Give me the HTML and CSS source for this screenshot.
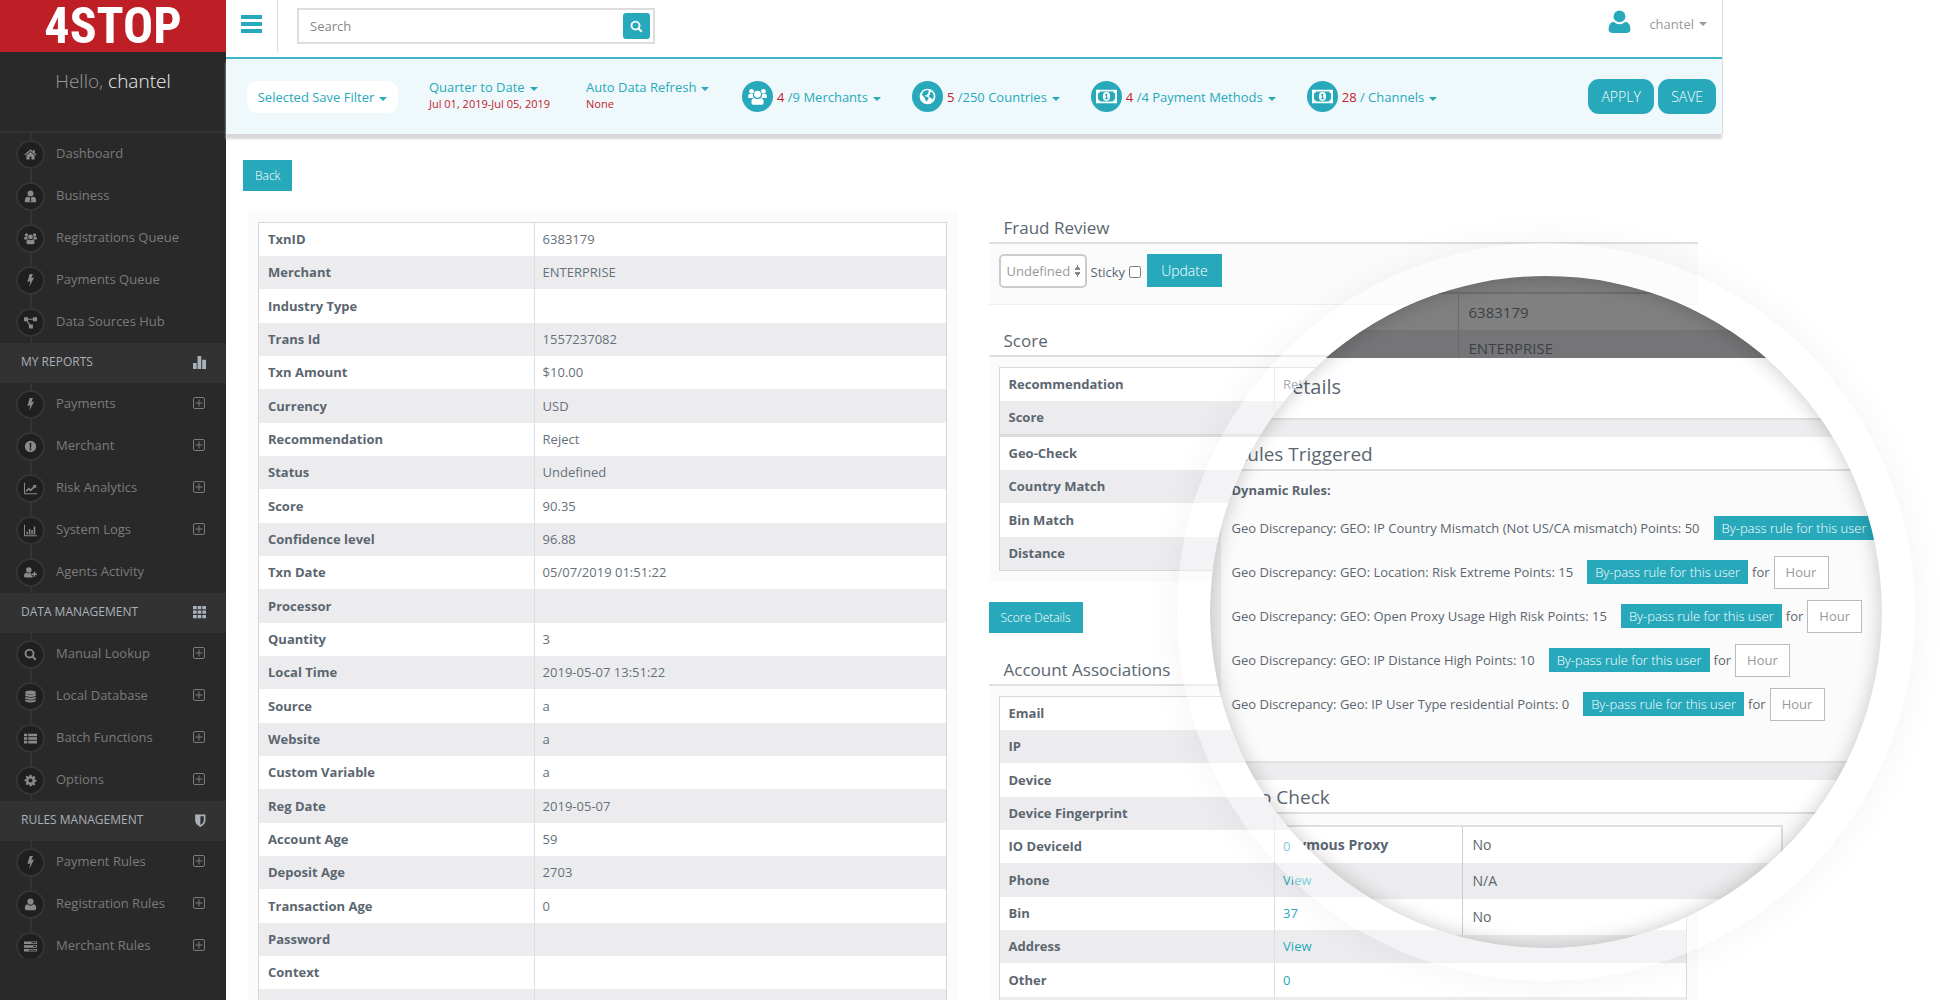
FILE: index.html
```html
<!DOCTYPE html>
<html lang="en">
<head>
<meta charset="utf-8">
<title>4STOP – Transaction details</title>
<link rel="stylesheet" href="styles.css">
</head>
<body>
<svg class="sprite" aria-hidden="true">
  <symbol id="home" viewBox="0 0 16 16"><path d="M8 1.6 0.6 8l1 1.2L8 3.8l6.4 5.4 1-1.2-2.2-1.9V2.4h-2v2z"/><path d="M8 5 3 9.2V14h3.8v-3.6h2.4V14H13V9.2z"/></symbol>
  <symbol id="usertie" viewBox="0 0 16 16"><circle cx="8" cy="4.200" r="3.600"/><path fill-rule="evenodd" d="M5 8.200Q1 8.600 1 12.600V14q0 1 1 1h12q1 0 1-1v-1.400q0-4-4-4.400L8 9.400zM7.200 9.600h1.600l-.4 1.200.8 3.200H6.800l.8-3.200z"/></symbol>
  <symbol id="users" viewBox="0 0 16 16"><circle cx="3" cy="3.600" r="2"/><circle cx="13" cy="3.600" r="2"/><path d="M0.200 9V7.400Q.2 5.600 2 5.800h2.200Q3.900 8 5 9.200H2Q.2 9.600.2 9zM15.800 9V7.400q0-1.800-1.800-1.600h-2.200q.3 2.200-.8 3.400h3q1.800.4 1.800-.2z"/><circle cx="8" cy="6" r="2.900"/><path d="M5 9.300Q2.800 10 2.800 12.400q0 2.600 2 2.600h6.400q2 0 2-2.600 0-2.400-2.200-3.100-3 1.700-6 0z"/></symbol>
  <symbol id="bolt" viewBox="0 0 16 16"><path d="M7 0h4L9 4.800l3.400-.6L6.400 16l1.400-7-3.600.8z"/></symbol>
  <symbol id="hub" viewBox="0 0 16 16"><path d="M0 1.500h5v5H0zM11 1.500h5v5h-5zM6 10.500h5v5H6zM5 3.300h6v1.400H5zM3.200 6.500l1.400-.5 3.200 4.600-1.600.4z"/></symbol>
  <symbol id="alert" viewBox="0 0 16 16"><path fill-rule="evenodd" d="M8 1a7 7 0 1 0 0 14A7 7 0 0 0 8 1zM6.900 3.500h2.200L8.800 9.500H7.200zM7 10.500h2v2H7z"/></symbol>
  <symbol id="line" viewBox="0 0 16 16"><path d="M0 1h1.200v12.800H16V15H0z"/><path d="m2 10.800 3.900-4L8 8.900l4-4-1.300-1.300H15v4.300l-1.500-1.500L8 11.700 5.900 9.600 3 12.200z"/></symbol>
  <symbol id="bars" viewBox="0 0 16 16"><path d="M0 1h1.200v12.800H16V15H0zM3 9.500h1.800v3.300H3zM6 6h1.800v6.800H6zM9 7.500h1.800v5.300H9zM12 3h1.800v9.800H12z"/></symbol>
  <symbol id="useradd" viewBox="0 0 16 16"><circle cx="6" cy="5" r="3.400"/><path d="M3 8.400Q0 8.800 0 12.400 0 14 1.600 14h9V11.600H9V9.400L8.800 8.400Q6 10.200 3 8.400zM12 7h1.800v2.300H16V11h-2.200v2.300H12V11H9.800V9.300H12z"/></symbol>
  <symbol id="search" viewBox="0 0 16 16"><path fill-rule="evenodd" d="M6.800.8a6 6 0 1 0 3.300 11l3.400 3.500 1.900-1.900-3.500-3.400A6 6 0 0 0 6.800.8zm0 2.200a3.800 3.800 0 1 1 0 7.600 3.800 3.800 0 0 1 0-7.600z"/></symbol>
  <symbol id="db" viewBox="0 0 16 16"><ellipse cx="8" cy="3" rx="6.500" ry="2.500"/><path d="M1.500 4.700q6.500 2.600 13 0V7q-6.500 3-13 0zM1.500 8.200q6.500 2.600 13 0v2.300q-6.500 3-13 0zM1.500 11.700q6.500 2.600 13 0v2q-6.500 3.400-13 0z"/></symbol>
  <symbol id="list" viewBox="0 0 16 16"><path d="M0 2h4v3.200H0zM5.200 2H16v3.200H5.200zM0 6.400h4v3.200H0zM5.200 6.400H16v3.200H5.200zM0 10.800h4V14H0zM5.200 10.800H16V14H5.200z"/></symbol>
  <symbol id="gear" viewBox="0 0 16 16"><path fill-rule="evenodd" d="M6.800 1h2.400l.4 2 1.200.5L12.500 2.300l1.500 1.600-1 1.700.4 1.200 1.900.4v2.200l-2 .4-.5 1.200 1.200 1.700-1.600 1.500-1.700-1-1.200.5L9.200 15H6.800l-.4-2-1.200-.5-1.700 1.200L2 12.200l1-1.700-.4-1.200-1.900-.4V6.800l2-.4.5-1.200L2 3.500 3.600 2l1.700 1L6.400 3zM8 5.400a2.600 2.600 0 1 0 0 5.200 2.600 2.600 0 0 0 0-5.200z"/></symbol>
  <symbol id="user" viewBox="0 0 16 16"><circle cx="8" cy="4.400" r="3.800"/><path d="M4.200 7.800Q1 8.400 1 12.700 1 15 3.200 15h9.600q2.200 0 2.200-2.300 0-4.300-3.200-4.900Q8 11 4.200 7.800z"/></symbol>
  <symbol id="tasks" viewBox="0 0 16 16"><path fill-rule="evenodd" d="M0 1.800h16V5H0zM9 2.800V4h6V2.800zM0 6.400h16v3.200H0zM11.500 7.400v1.200H15V7.400zM0 11h16v3.200H0zM6 12v1.200h9V12z"/></symbol>
  <symbol id="plus" viewBox="0 0 12 12"><rect x=".5" y=".5" width="11" height="11" rx="1.500" fill="none" stroke="currentColor"/><path d="M5.500 2.500h1v3h3v1h-3v3h-1v-3h-3v-1h3z"/></symbol>
  <symbol id="chart" viewBox="0 0 12 12"><path d="M0 6.500h3.400V12H0zM4.200 0h3.400v12H4.200zM8.500 3.500H12V12H8.500z"/></symbol>
  <symbol id="grid" viewBox="0 0 12 12"><path d="M0 0h3.400v3H0zM4.300 0h3.400v3H4.300zM8.600 0H12v3H8.600zM0 4.200h3.400v3H0zM4.300 4.200h3.400v3H4.300zM8.600 4.200H12v3H8.600zM0 8.400h3.400v3H0zM4.300 8.400h3.400v3H4.300zM8.600 8.400H12v3H8.600z"/></symbol>
  <symbol id="shield" viewBox="0 0 12 12"><path fill-rule="evenodd" d="M2 .5h9.500V6q0 3.500-4.700 6Q2 9.500 2 6zM6.800 2v8.200Q10 8.200 10 6V2z"/></symbol>
  <symbol id="globe" viewBox="0 0 16 16"><circle cx="8" cy="8" r="7.400"/><path class="cut" d="M4 3.400Q6 1.800 8.600 2l1 .8-1 1 .6 1-1.400 1-.2 1.200-1.400-.4-.6 1 1.600.6 1.800.8-.2 1.600-1.200 1.400-.6 1-1-2-1-2.200Q3.400 7.400 2.800 6zM10.200 4.400l1.600-1 1.800 2.400.4 2.600-1.400 2.400-1.200-1.400-1.600-.6-.4-1.800 1.200-1.200z"/></symbol>
  <symbol id="money" viewBox="0 0 22 16"><path fill-rule="evenodd" d="M0 1h22v14H0zM4 2.800Q4 4.600 2 4.800v6.400q2 .2 2 2h14q0-1.800 2-2V4.800q-2-.2-2-2z"/><ellipse cx="11" cy="8" rx="3.800" ry="4.600"/><path class="cut" d="M10.400 5h1.400v4.800h1v1H9.400v-1h1V6.600l-1 .3V5.800z"/></symbol>
</svg>

<aside class="sidebar">
  <a class="logo" href="#">4STOP</a>
  <p class="hello">Hello, <b>chantel</b></p>
  <ul class="nav">
    <li><a href="#"><span class="dot"><svg><use href="#home"/></svg></span>Dashboard</a></li>
    <li><a href="#"><span class="dot"><svg><use href="#usertie"/></svg></span>Business</a></li>
    <li><a href="#"><span class="dot"><svg><use href="#users"/></svg></span>Registrations Queue</a></li>
    <li><a href="#"><span class="dot"><svg><use href="#bolt"/></svg></span>Payments Queue</a></li>
    <li><a href="#"><span class="dot"><svg><use href="#hub"/></svg></span>Data Sources Hub</a></li>
  </ul>
  <h3>MY REPORTS<svg><use href="#chart"/></svg></h3>
  <ul class="nav">
    <li><a href="#"><span class="dot"><svg><use href="#bolt"/></svg></span>Payments<svg class="plus"><use href="#plus"/></svg></a></li>
    <li><a href="#"><span class="dot"><svg><use href="#alert"/></svg></span>Merchant<svg class="plus"><use href="#plus"/></svg></a></li>
    <li><a href="#"><span class="dot"><svg><use href="#line"/></svg></span>Risk Analytics<svg class="plus"><use href="#plus"/></svg></a></li>
    <li><a href="#"><span class="dot"><svg><use href="#bars"/></svg></span>System Logs<svg class="plus"><use href="#plus"/></svg></a></li>
    <li><a href="#"><span class="dot"><svg><use href="#useradd"/></svg></span>Agents Activity</a></li>
  </ul>
  <h3>DATA MANAGEMENT<svg><use href="#grid"/></svg></h3>
  <ul class="nav">
    <li><a href="#"><span class="dot"><svg><use href="#search"/></svg></span>Manual Lookup<svg class="plus"><use href="#plus"/></svg></a></li>
    <li><a href="#"><span class="dot"><svg><use href="#db"/></svg></span>Local Database<svg class="plus"><use href="#plus"/></svg></a></li>
    <li><a href="#"><span class="dot"><svg><use href="#list"/></svg></span>Batch Functions<svg class="plus"><use href="#plus"/></svg></a></li>
    <li><a href="#"><span class="dot"><svg><use href="#gear"/></svg></span>Options<svg class="plus"><use href="#plus"/></svg></a></li>
  </ul>
  <h3>RULES MANAGEMENT<svg><use href="#shield"/></svg></h3>
  <ul class="nav nav-last">
    <li><a href="#"><span class="dot"><svg><use href="#bolt"/></svg></span>Payment Rules<svg class="plus"><use href="#plus"/></svg></a></li>
    <li><a href="#"><span class="dot"><svg><use href="#user"/></svg></span>Registration Rules<svg class="plus"><use href="#plus"/></svg></a></li>
    <li><a href="#"><span class="dot"><svg><use href="#tasks"/></svg></span>Merchant Rules<svg class="plus"><use href="#plus"/></svg></a></li>
  </ul>
</aside>

<main class="main">
  <div class="top">
    <header class="header">
      <button class="menu" type="button" aria-label="Menu"><i></i><i></i><i></i></button>
      <form class="search">
        <input type="text" placeholder="Search" aria-label="Search">
        <button type="button" aria-label="Search"><svg><use href="#search"/></svg></button>
      </form>
      <button class="account" type="button"><svg><use href="#user"/></svg>chantel<i class="caret"></i></button>
    </header>
    <div class="filters">
      <button class="pill" type="button">Selected Save Filter<i class="caret"></i></button>
      <div class="stack stack-date"><button type="button">Quarter to Date<i class="caret"></i></button><small>Jul 01, 2019-Jul 05, 2019</small></div>
      <div class="stack stack-refresh"><button type="button">Auto Data Refresh<i class="caret"></i></button><small>None</small></div>
      <button class="count" type="button"><span class="disc"><svg><use href="#users"/></svg></span><span><em>4</em> /9 Merchants<i class="caret"></i></span></button>
      <button class="count" type="button"><span class="disc"><svg class="small"><use href="#globe"/></svg></span><span><em>5</em> /250 Countries<i class="caret"></i></span></button>
      <button class="count" type="button"><span class="disc"><svg><use href="#money"/></svg></span><span><em>4</em> /4 Payment Methods<i class="caret"></i></span></button>
      <button class="count" type="button"><span class="disc"><svg><use href="#money"/></svg></span><span><em>28</em> / Channels<i class="caret"></i></span></button>
      <div class="actions"><button type="button">APPLY</button><button type="button">SAVE</button></div>
    </div>
  </div>

  <div class="content">
    <button class="btn back" type="button">Back</button>
    <div class="columns">
      <section class="panel">
        <table class="data">
          <tr><th>TxnID</th><td>6383179</td></tr>
          <tr><th>Merchant</th><td>ENTERPRISE</td></tr>
          <tr><th>Industry Type</th><td></td></tr>
          <tr><th>Trans Id</th><td>1557237082</td></tr>
          <tr><th>Txn Amount</th><td>$10.00</td></tr>
          <tr><th>Currency</th><td>USD</td></tr>
          <tr><th>Recommendation</th><td>Reject</td></tr>
          <tr><th>Status</th><td>Undefined</td></tr>
          <tr><th>Score</th><td>90.35</td></tr>
          <tr><th>Confidence level</th><td>96.88</td></tr>
          <tr><th>Txn Date</th><td>05/07/2019 01:51:22</td></tr>
          <tr><th>Processor</th><td></td></tr>
          <tr><th>Quantity</th><td>3</td></tr>
          <tr><th>Local Time</th><td>2019-05-07 13:51:22</td></tr>
          <tr><th>Source</th><td>a</td></tr>
          <tr><th>Website</th><td>a</td></tr>
          <tr><th>Custom Variable</th><td>a</td></tr>
          <tr><th>Reg Date</th><td>2019-05-07</td></tr>
          <tr><th>Account Age</th><td>59</td></tr>
          <tr><th>Deposit Age</th><td>2703</td></tr>
          <tr><th>Transaction Age</th><td>0</td></tr>
          <tr><th>Password</th><td></td></tr>
          <tr><th>Context</th><td></td></tr>
          <tr><th></th><td></td></tr>
        </table>
      </section>

      <div class="side">
        <h2>Fraud Review</h2>
        <section class="panel review">
          <select aria-label="Status"><option>Undefined</option></select>
          <label>Sticky<input type="checkbox"></label>
          <button class="btn update" type="button">Update</button>
        </section>
        <h2>Score</h2>
        <section class="panel">
          <table class="data">
            <tr><th>Recommendation</th><td>Reject</td></tr>
            <tr><th>Score</th><td></td></tr>
          </table>
          <table class="data joined">
            <tr><th>Geo-Check</th><td></td></tr>
            <tr><th>Country Match</th><td></td></tr>
            <tr><th>Bin Match</th><td></td></tr>
            <tr><th>Distance</th><td></td></tr>
          </table>
        </section>
        <button class="btn details" type="button">Score Details</button>
        <h2>Account Associations</h2>
        <section class="panel">
          <table class="data">
            <tr><th>Email</th><td></td></tr>
            <tr><th>IP</th><td></td></tr>
            <tr><th>Device</th><td></td></tr>
            <tr><th>Device Fingerprint</th><td></td></tr>
            <tr><th>IO DeviceId</th><td><a href="#">0</a></td></tr>
            <tr><th>Phone</th><td><a href="#">View</a></td></tr>
            <tr><th>Bin</th><td><a href="#">37</a></td></tr>
            <tr><th>Address</th><td><a href="#">View</a></td></tr>
            <tr><th>Other</th><td><a href="#">0</a></td></tr>
            <tr><th></th><td></td></tr>
          </table>
        </section>

        <div class="lens">
          <div class="dim">
            <table>
              <tr><th></th><td>6383179</td></tr>
              <tr><th></th><td>ENTERPRISE</td></tr>
            </table>
          </div>
          <div class="modal">
            <h2 class="title">Details</h2>
            <div class="box rules">
              <h2>Rules Triggered</h2>
              <div class="body">
                <h4>Dynamic Rules:</h4>
                <p>Geo Discrepancy: GEO: IP Country Mismatch (Not US/CA mismatch) Points: 50<button type="button">By-pass rule for this user</button></p>
                <p>Geo Discrepancy: GEO: Location: Risk Extreme Points: 15<button type="button">By-pass rule for this user</button>for<input type="text" placeholder="Hour" aria-label="Hour"></p>
                <p>Geo Discrepancy: GEO: Open Proxy Usage High Risk Points: 15<button type="button">By-pass rule for this user</button>for<input type="text" placeholder="Hour" aria-label="Hour"></p>
                <p>Geo Discrepancy: GEO: IP Distance High Points: 10<button type="button">By-pass rule for this user</button>for<input type="text" placeholder="Hour" aria-label="Hour"></p>
                <p>Geo Discrepancy: Geo: IP User Type residential Points: 0<button type="button">By-pass rule for this user</button>for<input type="text" placeholder="Hour" aria-label="Hour"></p>
              </div>
            </div>
            <div class="box geo">
              <h2>Geo Check</h2>
              <div class="body">
                <table>
                  <tr><th>Anonymous Proxy</th><td>No</td></tr>
                  <tr><th></th><td>N/A</td></tr>
                  <tr><th></th><td>No</td></tr>
                </table>
              </div>
            </div>
          </div>
          <div class="shade"></div>
        </div>
      </div>
    </div>
  </div>
</main>
</body>
</html>
```
FILE: styles.css
```css
* { box-sizing: border-box; }
body {
  margin: 0;
  height: 100vh;
  overflow: hidden;
  display: flex;
  background: #fff;
  color: #5b6670;
  font: 13px/20px "Open Sans", "Noto Sans", sans-serif;
}
svg { fill: currentColor; display: block; }
button, input, select { font: inherit; color: inherit; }
button { border: 0; background: none; padding: 0; white-space: nowrap; }
a { color: inherit; text-decoration: none; }
h2, h3, h4, p, ul { margin: 0; padding: 0; font-weight: 400; }
.sprite { position: absolute; width: 0; height: 0; }
.caret {
  display: inline-block;
  margin-left: 5px;
  vertical-align: 1px;
  border: 4px solid transparent;
  border-top-color: currentColor;
  border-bottom: 0;
}

/* Sidebar */
.sidebar { flex: none; width: 226px; background: #292929; color: #7b7b7b; }
.logo {
  display: flex;
  align-items: center;
  justify-content: center;
  height: 52px;
  background: #be1e25;
  color: #fff;
  font: bold 50px/52px "Roboto Condensed", Roboto, sans-serif;
}
.hello { height: 81px; padding-top: 17px; border-bottom: 2px solid #343434; text-align: center; font-size: 19px; line-height: 24px; font-weight: 300; color: #999; }
.hello b { font-weight: 300; color: #eee; }
.nav { list-style: none; background: linear-gradient(#343434, #343434) 30px 0 / 2px 100% no-repeat; }
.nav a { display: flex; align-items: center; height: 42px; padding: 0 21px 2px 16px; font-size: 13px; }
.dot { display: flex; align-items: center; justify-content: center; width: 29px; height: 29px; margin: 2px 11px 0 0; border: 2px solid #343434; border-radius: 50%; background: #1f1f1f; color: #8a8a8a; }
.dot svg { width: 13px; height: 13px; }
.plus { width: 12px; height: 12px; margin-left: auto; }
.nav-last { max-height: 117px; overflow: hidden; }
.sidebar h3 { display: flex; align-items: center; justify-content: space-between; height: 40px; padding: 0 20px 2px 21px; background: #323232; color: #a9b1ba; font-size: 12px; }
.sidebar h3 svg { width: 13px; height: 13px; }

/* Top bars */
.main { flex: 1; min-width: 0; padding-right: 217px; }
.top { border-right: 1px solid #ddd; }
.header { display: flex; height: 57px; padding-right: 15px; }
.menu { display: flex; flex-direction: column; gap: 3px; width: 52px; height: 52px; padding: 15px 15px; border-right: 1px solid #ddd; }
.menu i { width: 21px; height: 4px; background: #27a9bb; }
.search { display: flex; align-items: center; width: 358px; height: 36px; margin: 8px 0 0 19px; padding-right: 3px; border: 2px solid #ddd; }
.search input { flex: 1; min-width: 0; height: 30px; padding: 0 11px; border: 0; outline: 0; }
.search input::placeholder { color: #888; opacity: 1; }
.search button { display: grid; place-items: center; width: 27px; height: 26px; border-radius: 3px; background: #27a9bb; color: #fff; }
.search svg { width: 13px; height: 13px; }
.account { display: flex; align-items: center; height: 47px; margin-left: auto; color: #999; }
.account svg { width: 25px; height: 28px; margin: 0 17px 4px 0; color: #27a9bb; }
.filters {
  display: flex;
  align-items: center;
  height: 77px;
  padding: 0 6px 0 21px;
  border-top: 2px solid #3fb6c4;
  background: #eff9fb;
  color: #27a9bb;
  box-shadow: 0 5px 2px #d9d7db;
}
.pill { width: 151px; height: 32px; border-radius: 10px; background: #fff; }
.stack { display: grid; justify-items: start; padding-bottom: 4px; }
.stack button { line-height: 17px; }
.stack small { font-size: 11px; line-height: 15px; color: #c4202b; }
.stack-date { margin-left: 31px; width: 157px; }
.stack-refresh { width: 156px; }
.count { display: flex; align-items: center; gap: 4px; margin-right: 31px; }
.count em { font-style: normal; color: #c4202b; }
.disc { display: grid; place-items: center; width: 31px; height: 31px; border-radius: 50%; background: #27a9bb; color: #fff; }
.disc svg { width: 21px; height: 19px; }
.disc .small { width: 17px; height: 17px; }
.cut { fill: #27a9bb; }
.actions { display: flex; gap: 4px; margin-left: auto; }
.actions button { height: 35px; padding: 0 13px; border-radius: 11px; background: #27a9bb; color: #fff; font-size: 14px; font-weight: 300; }
.actions button:first-child { width: 66px; }

/* Content */
.content { padding: 26px 25px 0 22px; }
.btn { background: #27a9bb; color: #fff; font-size: 12px; font-weight: 300; height: 31px; padding: 0 12px; }
.back { display: block; margin: 0 0 20px -5px; }
.columns { display: grid; grid-template-columns: 1fr 1fr; gap: 31px; }
.panel { padding: 11px 11px 11px 10px; background: #fbfbfb; }
.side { position: relative; }
.side .panel { padding-top: 10px; }
.side h2 { height: 33px; padding: 5px 15px 0; border-bottom: 2px solid #dedfe0; font-size: 17px; line-height: 24px; }
.data { width: 100%; border: 1px solid #d6d8d9; border-spacing: 0; table-layout: fixed; background: #fff; }
.data th, .data td { height: 33px; padding: 0 9px 1px; text-align: left; font-weight: 700; }
.data tr:nth-child(3n) th { height: 34px; }
.data th { width: 40%; }
.data td { padding: 0 8px 1px; border-left: 1px solid #dedfe0; font-weight: 400; color: #66707a; }
.data tr:nth-child(even) { background: #ececee; }
.data.joined { border-top: 2px solid #dcddde; }
.data a { color: #27a9bb; }
.review { display: flex; align-items: flex-start; height: 61px; margin-bottom: 19px; border-bottom: 1px solid #f0f0f0; }
.review select {
  width: 88px;
  height: 34px;
  padding: 0 6px;
  border: 2px solid #ccc;
  border-radius: 5px;
  color: #999;
  appearance: none;
  background:
    conic-gradient(from 150deg at 50% 0, #888 60deg, transparent 0) right 5px top 9px / 5px 5px no-repeat,
    conic-gradient(from -30deg at 50% 100%, #888 60deg, transparent 0) right 5px top 16px / 5px 5px no-repeat,
    #fff;
}
.review label { display: flex; align-items: center; gap: 4px; height: 36px; margin: 0 6px 0 4px; }
.review input { width: 12px; height: 12px; margin: 0; }
.update { height: 33px; padding: 0 14px; font-size: 14px; }
.details { display: block; margin: 20px 0 20px; }

/* Magnifier over the right column */
.lens {
  position: absolute;
  left: 188px;
  top: 32px;
  width: 738px;
  height: 738px;
  overflow: hidden;
  border: 33px solid rgba(255, 255, 255, .4);
  border-radius: 50%;
  box-shadow: 0 0 36px rgba(0, 0, 0, .05);
}
.shade { position: absolute; inset: 0; border-radius: 50%; box-shadow: inset 0 0 20px rgba(0, 0, 0, .22); }
.lens table { border-spacing: 0; table-layout: fixed; text-align: left; }
.dim { height: 82px; padding-top: 16px; overflow: hidden; background: #7e7e7e; font-size: 15px; color: #3c4046; }
.dim table { width: 100%; border-top: 2px solid #6e6e6e; background: #808080; }
.dim th { width: 248px; }
.dim td { height: 36px; padding: 0 10px; border-left: 1px solid #6a6a6a; }
.dim tr:nth-child(2) { background: #757578; }
.modal { height: 577px; overflow: hidden; background: #ededef; padding-left: 11px; }
.modal h2.title { height: 62px; margin-left: -11px; padding: 16px 0 0 68px; background: #fff; border-bottom: 2px solid #dedfe0; font-size: 20px; line-height: 26px; }
.box { margin-top: 17px; background: #fff; }
.box h2 { height: 34px; padding: 5px 15px 0; font-size: 19px; line-height: 25px; border-bottom: 2px solid #dedfe0; }
.rules .body { height: 292px; padding: 9px 11px; background: #fbfbfb; border-bottom: 2px solid #e2e2e4; }
.rules h4 { font-weight: 700; }
.rules p { display: flex; align-items: center; height: 44px; white-space: nowrap; font-size: 13px; }
.rules h4 + p { margin-top: 6px; }
.rules p button { flex: none; width: 161px; height: 24px; margin: 0 4px 0 14px; background: #27a9bb; color: #fff; font-weight: 300; }
.rules p input { width: 55px; height: 33px; margin-left: 4px; padding: 0 11px; border: 1px solid #bbb; border-radius: 0; background: #fff; }
.rules p input::placeholder { color: #999; opacity: 1; }
.geo .body { padding: 11px 0 0 11px; background: #fbfbfb; }
.geo table { width: 551px; border: 2px solid #dedfe0; background: #fff; font-size: 14px; }
.geo th { width: 228px; padding-left: 28px; font-weight: 700; }
.geo td { height: 36px; padding: 0 10px; border-left: 1px solid #ccc; }
.geo tr:nth-child(2) { background: #ececee; }
```
